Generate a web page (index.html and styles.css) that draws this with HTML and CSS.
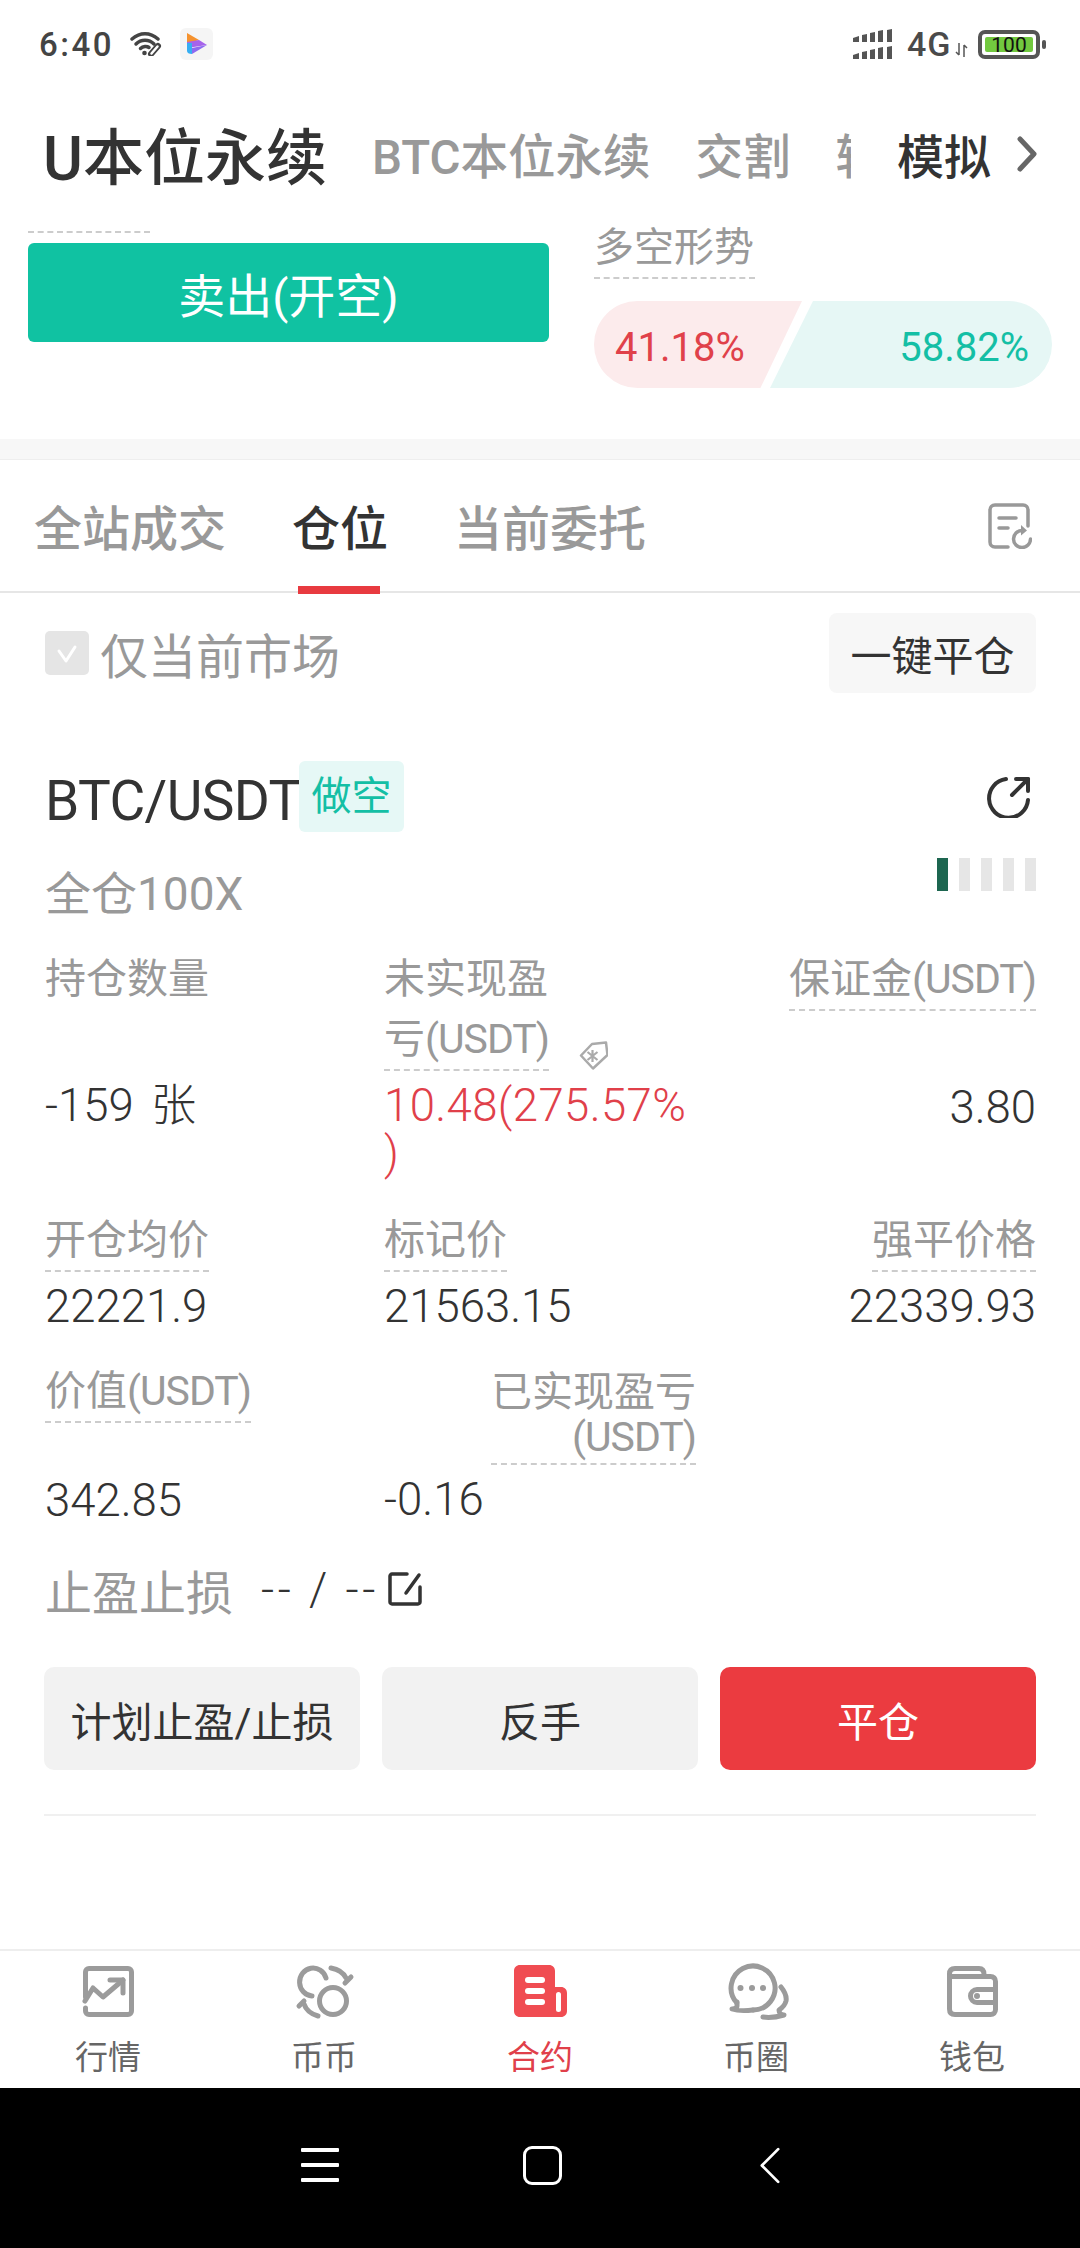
FILE: index.html
```html
<!DOCTYPE html>
<html lang="zh-CN">
<head>
    <meta charset="UTF-8">
    <meta name="viewport" content="width=device-width, initial-scale=1.0">
    <title>U本位永续</title>
    <link rel="stylesheet" href="styles.css">
</head>
<body>
    <div class="status-bar">
        <div class="status-left">
            <span class="clock">6:40</span>
            <svg class="wifi" viewBox="0 0 34 24" fill="none" stroke="#444" stroke-width="3.500" stroke-linecap="round">
                <path d="M2 7C10 0 20 0 28 7"/>
                <path d="M6 12C11 7 19 7 24 12"/>
                <path d="M10.500 16.500C13 14 17 14 19 15.500"/>
                <circle cx="14.500" cy="21" r="2.300" fill="#444" stroke="none"/>
                <path d="M21 22l7-8" stroke="#444" stroke-width="6"/>
                <path d="M21.500 21.500l6-7" stroke="#fff" stroke-width="2.500"/>
            </svg>
            <span class="app-icon">
                <svg viewBox="0 0 33 32" width="33" height="32">
                    <path d="M7 5l12 7-12 4z" fill="#f5922e"/>
                    <path d="M7 14l12-2 8 5-20 3z" fill="#a663ea"/>
                    <path d="M7 15h5v11c-3 0-5-1-5-3z" fill="#36aef2"/>
                    <path d="M12 20l15-3-15 9z" fill="#8d6bf0"/>
                </svg>
            </span>
        </div>
        <div class="status-right">
            <svg class="signal" viewBox="0 0 41 30" fill="#555">
                <path d="M0 9l6-2v6H0zM9 6l5-1v8H9zM17 4l5-1v10h-5zM25 2l5-1v12h-5zM34 1l5-1v13h-5z"/>
                <path d="M0 26l6-2v6H0zM9 23l5-1v8H9zM17 21l5-1v10h-5zM25 19l5-1v12h-5zM34 18l5-1v13h-5z"/>
            </svg>
            <span class="net">4G</span>
            <svg class="net-arrows" viewBox="0 0 13 14" fill="none" stroke="#555" stroke-width="1.500">
                <path d="M4 0v12M1 9l3 3M9 14V2M12 5L9 2"/>
            </svg>
            <div class="battery"><span class="battery-level">100</span></div>
            <span class="battery-nub"></span>
        </div>
    </div>

    <div class="market-tabs">
        <div class="market-scroll">
            <span class="market-current">U本位永续</span>
            <span class="market-tab">BTC本位永续</span>
            <span class="market-tab">交割</span>
            <span class="market-tab">转</span>
        </div>
        <span class="market-demo">模拟</span>
        <svg class="market-more" viewBox="0 0 20 36" fill="none" stroke="#666" stroke-width="5" stroke-linecap="round" stroke-linejoin="round">
            <path d="M3 3l14 15L3 33"/>
        </svg>
    </div>

    <div class="trade-row">
        <div class="trade-left">
            <div class="dotted-stub"></div>
            <button class="sell-btn">卖出(开空)</button>
        </div>
        <div class="trade-right">
            <span class="sentiment-label">多空形势</span>
            <div class="sentiment-bar">
                <span class="sentiment-short">41.18%</span>
                <span class="sentiment-long">58.82%</span>
            </div>
        </div>
    </div>

    <div class="band"></div>

    <div class="order-tabs">
        <span class="order-tab">全站成交</span>
        <span class="order-tab order-tab-active">仓位</span>
        <span class="order-tab">当前委托</span>
        <svg class="history-icon" viewBox="0 0 44 46" fill="none" stroke="#999" stroke-width="3.500" stroke-linecap="round">
            <path d="M20 44H7c-3 0-5-2-5-5V7c0-3 2-5 5-5h28c3 0 5 2 5 5v16"/>
            <path d="M11 15h17M11 25h9"/>
            <path d="M42.500 36a8.500 8.500 0 1 1-8.500-8.500"/>
            <path d="M33 22l6 5.500-6 5z" fill="#999" stroke="none"/>
        </svg>
    </div>

    <div class="filter-row">
        <span class="check-box">
            <svg viewBox="0 0 44 44" width="44" height="44" fill="none" stroke="#fff" stroke-width="3" stroke-linecap="round" stroke-linejoin="round">
                <path d="M14 20l7 10 9-14"/>
            </svg>
        </span>
        <span class="filter-label">仅当前市场</span>
        <button class="close-all">一键平仓</button>
    </div>

    <div class="position">
        <div class="position-head">
            <span class="symbol">BTC/USDT</span>
            <span class="side-tag">做空</span>
            <svg class="share-icon" viewBox="0 0 44 42" fill="none" stroke="#333" stroke-width="4" stroke-linecap="round" stroke-linejoin="round">
                <path d="M19 3A19.500 19.500 0 1 0 41 24"/>
                <path d="M29 3h12v12"/>
                <path d="M41 3L25 19"/>
            </svg>
        </div>
        <div class="position-sub">
            <span class="margin-mode">全仓100X</span>
            <div class="risk-bars">
                <span class="risk-bar risk-bar-on"></span>
                <span class="risk-bar"></span>
                <span class="risk-bar"></span>
                <span class="risk-bar"></span>
                <span class="risk-bar"></span>
            </div>
        </div>

        <div class="stats stats-first">
            <div class="stat">
                <span class="stat-label">持仓数量</span>
                <span class="stat-value stat-value-far">-159 张</span>
            </div>
            <div class="stat">
                <div class="pnl-head">
                    <span class="stat-label dotted">未实现盈<br>亏<span class="unit">(USDT)</span></span>
                    <svg class="tag-icon" viewBox="0 0 30 30" fill="none" stroke="#aaa" stroke-width="2.500" stroke-linejoin="round">
                        <path d="M14 4L28 2.500 29.500 15 15 28.500 3 15.500z"/>
                        <path d="M9.500 12l10 8M19.500 12l-10 8M14.500 10v12" stroke-width="2.200"/>
                    </svg>
                </div>
                <span class="stat-value stat-value-red">10.48(275.57%<br>)</span>
            </div>
            <div class="stat stat-end">
                <span class="stat-label dotted">保证金<span class="unit">(USDT)</span></span>
                <span class="stat-value stat-value-far">3.80</span>
            </div>
        </div>

        <div class="stats stats-second">
            <div class="stat">
                <span class="stat-label dotted">开仓均价</span>
                <span class="stat-value">22221.9</span>
            </div>
            <div class="stat">
                <span class="stat-label dotted">标记价</span>
                <span class="stat-value">21563.15</span>
            </div>
            <div class="stat stat-end">
                <span class="stat-label dotted">强平价格</span>
                <span class="stat-value">22339.93</span>
            </div>
        </div>

        <div class="stats">
            <div class="stat">
                <span class="stat-label dotted">价值<span class="unit">(USDT)</span></span>
                <span class="stat-value stat-value-low">342.85</span>
            </div>
            <div class="stat">
                <span class="stat-label dotted realized">已实现盈亏<br><span class="unit">(USDT)</span></span>
                <span class="stat-value">-0.16</span>
            </div>
            <div class="stat"></div>
        </div>

        <div class="tp-row">
            <span class="tp-label">止盈止损</span>
            <span class="tp-value">-- / --</span>
            <svg class="edit-icon" viewBox="0 0 34 34" fill="none" stroke="#333" stroke-width="3.500" stroke-linecap="round" stroke-linejoin="round">
                <path d="M19 2H4C3 2 2 3 2 4v26c0 1 1 2 2 2h26c1 0 2-1 2-2V15"/>
                <path d="M31 3L18 21"/>
            </svg>
        </div>

        <div class="actions">
            <button class="action">计划止盈/止损</button>
            <button class="action">反手</button>
            <button class="action action-close">平仓</button>
        </div>
        <div class="position-end"></div>
    </div>

    <nav class="bottom-nav">
        <div class="nav-item">
            <svg class="nav-icon" viewBox="0 0 56 54" fill="none" stroke="#9b9b9b" stroke-width="5" stroke-linejoin="round" stroke-linecap="round">
                <path d="M5.500 33V8c0-2 1.500-3.500 3.500-3.500h39c2 0 3.500 1.500 3.500 3.500v39c0 2-1.500 3.500-3.500 3.500H9c-2 0-3.500-1.500-3.500-3.500v-3"/>
                <path d="M5 37l8-13 10 9 20-17"/>
                <path d="M30 16h13v13"/>
            </svg>
            <span class="nav-label">行情</span>
        </div>
        <div class="nav-item">
            <svg class="nav-icon" viewBox="0 0 56 54" fill="none" stroke="#9b9b9b" stroke-width="5" stroke-linecap="round" stroke-linejoin="round">
                <circle cx="37" cy="37" r="13.500"/>
                <path d="M30 14A13.500 14 0 1 0 16 32"/>
                <path d="M35 4c6 1 12 4 15 10"/>
                <path d="M55 13l-6 6"/>
                <path d="M8 37l-5 5"/>
                <path d="M8 40c2 6 7 10 14 12"/>
            </svg>
            <span class="nav-label">币币</span>
        </div>
        <div class="nav-item">
            <svg class="nav-icon" viewBox="0 0 56 54">
                <path d="M8 1h29c3.500 0 6 2.500 6 6v16h6c3.500 0 6 2.500 6 6v18c0 3.500-2.500 6-6 6H8c-3.500 0-6-2.500-6-6V7c0-3.500 2.500-6 6-6z" fill="#f04c52"/>
                <rect x="13" y="13" width="20" height="6" rx="3" fill="#fff"/>
                <rect x="13" y="24" width="20" height="6" rx="3" fill="#fff"/>
                <rect x="13" y="35" width="20" height="6" rx="3" fill="#fff"/>
                <rect x="44" y="28" width="5" height="20" rx="2.500" fill="#fff"/>
            </svg>
            <span class="nav-label nav-label-active">合约</span>
        </div>
        <div class="nav-item">
            <svg class="nav-icon" viewBox="0 0 56 54" fill="none" stroke="#9b9b9b" stroke-width="5" stroke-linecap="round" stroke-linejoin="round">
                <path d="M8.700 38.700A22 22 0 1 1 25 46"/>
                <path d="M9 38v4c0 2-2 3-5 3 6 2 13 2 21 1"/>
                <path d="M53 23c4 5 6 9 5 14-1 4-4 7-7 9 0 3 2 5 5 5-7 2-15 3-21 2"/>
                <circle cx="12.500" cy="24" r="3" fill="#9b9b9b" stroke="none"/>
                <circle cx="24" cy="24" r="3" fill="#9b9b9b" stroke="none"/>
                <circle cx="35" cy="24" r="3" fill="#9b9b9b" stroke="none"/>
            </svg>
            <span class="nav-label">币圈</span>
        </div>
        <div class="nav-item">
            <svg class="nav-icon" viewBox="0 0 56 54" fill="none" stroke="#9b9b9b" stroke-width="5" stroke-linejoin="round">
                <path d="M5.500 14v-4c0-3.500 2-5.500 5.500-5.500h24c3 0 5 2 5 6v2"/>
                <path d="M5.500 12.500h41c3 0 5 2 5 5v28c0 3-2 5-5 5H11c-3.500 0-5.500-2-5.500-5.500z"/>
                <path d="M51.500 25.500H33a6.500 6.500 0 0 0 0 13h18.500"/>
                <circle cx="33" cy="32" r="3" fill="#9b9b9b" stroke="none"/>
            </svg>
            <span class="nav-label">钱包</span>
        </div>
    </nav>

    <div class="system-nav">
        <div class="sys-menu"><span></span><span></span><span></span></div>
        <span class="sys-home"></span>
        <svg class="sys-back" viewBox="0 0 22 40" fill="none" stroke="#fff" stroke-width="3" stroke-linecap="round" stroke-linejoin="round">
            <path d="M20 2L2 20l18 18"/>
        </svg>
    </div>
</body>
</html>
```

FILE: styles.css
```css
* {
    box-sizing: border-box;
}
html, body {
    margin: 0;
    padding: 0;
}
body {
    width: 1080px;
    height: 2248px;
    overflow: hidden;
    display: flex;
    flex-direction: column;
    background-color: #fff;
    color: #333;
    font-family: Roboto, "Noto Sans CJK SC", sans-serif;
}
button {
    border: none;
    font-family: inherit;
    padding: 0;
}

/* status bar */
.status-bar {
    height: 90px;
    padding: 28px 34px 0 39px;
    display: flex;
    justify-content: space-between;
    align-items: flex-start;
}
.status-left, .status-right {
    display: flex;
    align-items: center;
    height: 32px;
}
.clock {
    font-size: 33px;
    font-weight: 500;
    letter-spacing: 2.5px;
    color: #444;
    width: 91px;
}
.wifi {
    width: 34px;
    height: 24px;
}
.app-icon {
    width: 33px;
    height: 32px;
    margin-left: 16px;
    background-color: #f5f5f5;
    border-radius: 6px;
}
.signal {
    width: 41px;
    height: 30px;
}
.net {
    font-size: 34px;
    font-weight: 500;
    letter-spacing: 1px;
    color: #4a4a4a;
    margin-left: 13px;
    width: 48px;
}
.net-arrows {
    width: 13px;
    height: 14px;
    margin-top: 12px;
}
.battery {
    width: 62px;
    height: 29px;
    margin-left: 10px;
    padding: 3px;
    border: 4px solid #555;
    border-radius: 7px;
    display: flex;
}
.battery-level {
    flex: 1;
    background-color: #72c93f;
    border-radius: 2px;
    font-size: 21px;
    line-height: 16px;
    text-align: center;
    color: #111;
}
.battery-nub {
    width: 4px;
    height: 9px;
    margin-left: 2px;
    background-color: #555;
    border-radius: 2px;
}

/* market tabs */
.market-tabs {
    height: 135px;
    padding: 0 42px 8px 43px;
    display: flex;
    align-items: center;
}
.market-scroll {
    width: 808px;
    flex: none;
    display: flex;
    align-items: center;
    gap: 45px;
    overflow: hidden;
    white-space: nowrap;
}
.market-current {
    font-size: 61px;
    font-weight: 500;
    color: #333;
}
.market-tab {
    font-size: 47.5px;
    font-weight: 500;
    color: #999;
}
.market-demo {
    font-size: 47px;
    font-weight: 500;
    margin-left: 46px;
    color: #333;
}
.market-more {
    width: 20px;
    height: 36px;
    margin-left: 26px;
}

/* buy / sell row */
.trade-row {
    height: 214px;
    padding: 6px 28px 0;
    display: flex;
    align-items: flex-start;
}
.trade-left {
    width: 521px;
}
.dotted-stub {
    width: 122px;
    border-top: 2px dashed #ccc;
}
.sell-btn {
    display: block;
    width: 100%;
    height: 99px;
    margin-top: 10px;
    background-color: #10c2a2;
    border-radius: 6px;
    color: #fff;
    font-size: 47px;
}
.trade-right {
    margin-left: 45px;
    width: 458px;
    margin-top: -3px;
}
.sentiment-label {
    display: block;
    width: 161px;
    height: 51px;
    line-height: 40px;
    font-size: 40px;
    color: #999;
    border-bottom: 2px dashed #ccc;
}
.sentiment-bar {
    height: 87px;
    margin-top: 22px;
    display: flex;
    font-size: 40px;
    line-height: 93px;
}
.sentiment-short {
    width: 208px;
    padding-left: 21px;
    color: #e0414a;
    background-color: #fcebec;
    border-radius: 44px 0 0 44px;
    clip-path: polygon(0 0, 100% 0, 80% 100%, 0 100%);
}
.sentiment-long {
    flex: 1;
    margin-left: -32px;
    padding-right: 23px;
    text-align: right;
    color: #14bfa5;
    background-color: #e6f7f5;
    border-radius: 0 44px 44px 0;
    clip-path: polygon(43px 0, 100% 0, 100% 100%, 0 100%);
}

.band {
    height: 21px;
    background-color: #f7f7f7;
    border-bottom: 1px solid #eee;
}

/* position tabs */
.order-tabs {
    height: 133px;
    padding: 0 47px 0 34px;
    display: flex;
    align-items: center;
    gap: 66px;
    border-bottom: 2px solid #e6e6e6;
}
.order-tab {
    font-size: 48px;
    font-weight: 500;
    color: #999;
    margin-top: -2px;
}
.order-tab-active {
    color: #333;
    position: relative;
}
.order-tab-active::after {
    content: "";
    position: absolute;
    left: 6px;
    right: 8px;
    top: 96px;
    height: 8px;
    background-color: #e83a40;
}
.history-icon {
    width: 44px;
    height: 46px;
    margin-left: auto;
    margin-right: 1px;
}

/* filter */
.filter-row {
    height: 120px;
    padding: 0 44px 0 45px;
    display: flex;
    align-items: center;
}
.check-box {
    width: 44px;
    height: 44px;
    background-color: #e5e5e5;
    border-radius: 5px;
}
.filter-label {
    margin-left: 11px;
    font-size: 48px;
    color: #999;
}
.close-all {
    width: 207px;
    height: 80px;
    margin-left: auto;
    background-color: #f7f7f7;
    border-radius: 8px;
    font-size: 41px;
    color: #333;
}

/* position card */
.position {
    padding: 0 44px 0 45px;
}
.position-head {
    display: flex;
    align-items: center;
    margin-top: 48px;
    height: 71px;
}
.symbol {
    font-size: 55px;
    letter-spacing: -0.6px;
    color: #333;
    width: 254px;
    margin-top: 8px;
    white-space: nowrap;
}
.side-tag {
    width: 105px;
    height: 71px;
    line-height: 71px;
    text-align: center;
    background-color: #e6f8f6;
    border-radius: 6px;
    font-size: 40px;
    color: #14bfa5;
}
.share-icon {
    width: 44px;
    height: 42px;
    margin-left: auto;
    margin-right: 5px;
}
.position-sub {
    display: flex;
    justify-content: space-between;
    align-items: flex-start;
    height: 91px;
    margin-top: 26px;
}
.margin-mode {
    font-size: 46px;
    line-height: 60px;
    margin-top: 6px;
    color: #999;
}
.risk-bars {
    display: flex;
    gap: 11px;
}
.risk-bar {
    width: 11px;
    height: 33px;
    background-color: #e6e6e6;
}
.risk-bar-on {
    background-color: #1d6650;
}

.stats {
    display: grid;
    grid-template-columns: 339px 1fr 330px;
}
.stats-first {
    height: 261px;
}
.stats-second {
    height: 151px;
}
.stat {
    display: flex;
    flex-direction: column;
    align-items: flex-start;
}
.stat-end {
    align-items: flex-end;
}
.stat-label {
    font-size: 41px;
    line-height: 60px;
    color: #999;
    white-space: nowrap;
}
.unit {
    letter-spacing: -1px;
}
.dotted {
    border-bottom: 2px dashed #ccc;
}
.stat-value {
    font-size: 45.5px;
    font-weight: 300;
    line-height: 48px;
    word-spacing: 6px;
    color: #333;
    margin-top: 11px;
    white-space: nowrap;
}
.stat-value-far {
    margin-top: 73px;
}
.stat-value-low {
    margin-top: 54px;
}
.stat-value-red {
    color: #e0404a;
    letter-spacing: 0.4px;
}
.pnl-head {
    display: flex;
    align-items: flex-end;
}
.tag-icon {
    width: 30px;
    height: 30px;
    margin-left: 29px;
    margin-bottom: 1px;
}
.realized {
    width: 205px;
    margin: 9px 0 0 107px;
    padding-bottom: 3px;
    line-height: 45px;
    text-align: right;
}
.tp-row {
    display: flex;
    align-items: center;
    height: 60px;
    margin-top: 34px;
}
.tp-label {
    font-size: 47px;
    color: #999;
}
.tp-value {
    margin-left: 28px;
    font-size: 46px;
    font-weight: 300;
    letter-spacing: 3.5px;
    color: #333;
}
.edit-icon {
    width: 34px;
    height: 34px;
    margin-left: 9px;
}
.actions {
    display: grid;
    grid-template-columns: repeat(3, 1fr);
    gap: 22px;
    margin-top: 48px;
    margin-left: -1px;
}
.action {
    height: 103px;
    background-color: #f2f2f2;
    border-radius: 10px;
    font-size: 41px;
    color: #333;
}
.action-close {
    background-color: #eb3b40;
    color: #fff;
}
.position-end {
    margin-top: 44px;
    margin-left: -1px;
    border-top: 2px solid #f0f0f0;
}

/* bottom navigation */
.bottom-nav {
    margin-top: auto;
    height: 139px;
    border-top: 2px solid #eee;
    display: grid;
    grid-template-columns: repeat(5, 1fr);
}
.nav-item {
    display: flex;
    flex-direction: column;
    align-items: center;
    padding-top: 13px;
}
.nav-icon {
    width: 56px;
    height: 54px;
    overflow: visible;
}
.nav-label {
    font-size: 33px;
    line-height: 40px;
    margin-top: 20px;
    color: #666;
}
.nav-label-active {
    color: #e0404a;
}

/* android nav */
.system-nav {
    height: 160px;
    background-color: #000;
    display: flex;
    align-items: center;
    padding-left: 301px;
    padding-bottom: 6px;
}
.sys-menu {
    width: 38px;
    height: 34px;
    display: flex;
    flex-direction: column;
    justify-content: space-between;
}
.sys-menu span {
    height: 4px;
    background-color: #fff;
    border-radius: 1px;
}
.sys-home {
    width: 39px;
    height: 39px;
    margin-left: 184px;
    border: 3px solid #fff;
    border-radius: 9px;
}
.sys-back {
    width: 20px;
    height: 39px;
    margin-left: 198px;
}
```
